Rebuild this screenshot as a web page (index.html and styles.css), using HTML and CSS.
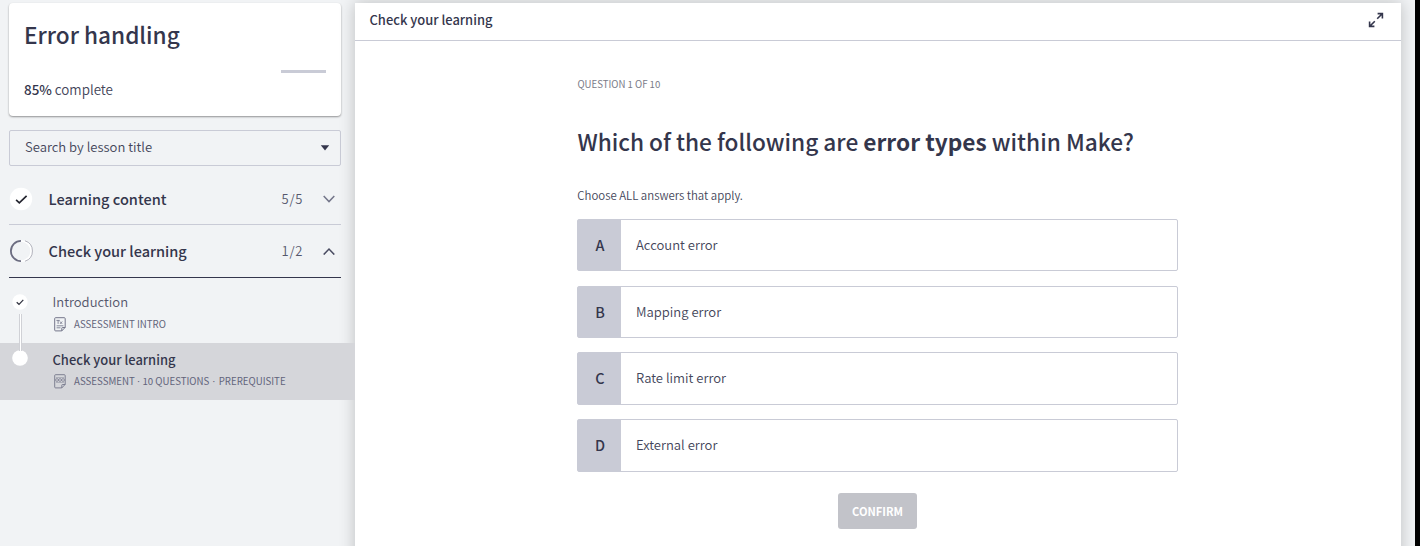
FILE: index.html
```html
<!DOCTYPE html>
<html lang="en">
<head>
<meta charset="utf-8">
<title>Error handling</title>
<link rel="stylesheet" href="styles.css">
</head>
<body>
<div class="app">
  <aside class="sidebar">
    <section class="course-card">
      <h1 class="course-title"><span>Error handling</span></h1>
      <div class="progress"><div class="progress-rest"></div></div>
      <p class="progress-label"><span><b>85%</b> complete</span></p>
    </section>
    <div class="search">
      <span class="search-text">Search by lesson title</span>
      <svg class="caret" width="10" height="6" viewBox="0 0 10 6"><path d="M0.8 0.3H9.2L5 5.4Z" fill="#34364c"/></svg>
    </div>
    <div class="section">
      <svg class="status" width="24" height="24" viewBox="0 0 24 24"><circle cx="12" cy="12" r="11.2" fill="#fff"/><path d="M7.1 12.9L10.3 15.8L17.6 8.9" fill="none" stroke="#24252f" stroke-width="1.7"/></svg>
      <span class="section-title">Learning content</span>
      <span class="count">5/5</span>
      <svg class="chevron" width="12" height="8" viewBox="0 0 12 8"><path d="M0.7 1L6 6.6L11.3 1" fill="none" stroke="#74768a" stroke-width="1.5"/></svg>
    </div>
    <div class="section section-open">
      <svg class="status" width="24" height="24" viewBox="0 0 24 24"><circle cx="12" cy="12" r="10.1" fill="none" stroke="#fff" stroke-width="1.5"/><path d="M16 1.8A10.7 10.7 0 0 1 16 22.2" fill="none" stroke="#a4a5b0" stroke-width="0.8"/><path d="M12 1.9A10.1 10.1 0 0 0 12 22.1" fill="none" stroke="#6b6c80" stroke-width="1.8"/></svg>
      <span class="section-title">Check your learning</span>
      <span class="count">1/2</span>
      <svg class="chevron" width="12" height="8" viewBox="0 0 12 8"><path d="M0.7 7.6L6 2L11.3 7.6" fill="none" stroke="#4a4c62" stroke-width="1.5"/></svg>
    </div>
    <ul class="lessons">
      <li class="lesson">
        <svg class="dot" width="16" height="16" viewBox="0 0 16 16"><circle cx="8" cy="8" r="7.7" fill="#fff"/><path d="M4.7 8.3L7 10.3L11.3 5.8" fill="none" stroke="#30323f" stroke-width="1.2"/></svg>
        <span class="connector"></span>
        <div class="lesson-title"><span>Introduction</span></div>
        <div class="lesson-meta">
          <svg width="12" height="15" viewBox="0 0 12 15" fill="none" stroke="#74768a" stroke-width="1"><path d="M1.5 .7H10.3Q11.2 .7 11.2 1.6V10.4L7.8 13.9H1.6Q.7 13.9 .7 13V1.6Q.7 .7 1.5 .7ZM7.8 13.9V11.2Q7.8 10.5 8.5 10.5H11.2"/><path d="M2.4 3.4H5.8M4.1 3.4V6.9M6 4.5L8.2 6.9M8.2 4.5L6 6.9M2.6 8.8H9.4M2.6 10.8H6.5" stroke-width=".85"/></svg>
          <span>ASSESSMENT INTRO</span>
        </div>
      </li>
      <li class="lesson lesson-active">
        <svg class="dot" width="16" height="16" viewBox="0 0 16 16"><circle cx="8" cy="8" r="7.8" fill="#fff"/></svg>
        <div class="lesson-title"><span>Check your learning</span></div>
        <div class="lesson-meta">
          <svg width="12" height="15" viewBox="0 0 12 15" fill="none" stroke="#74768a" stroke-width=".9"><path d="M1.5 .7H10.3Q11.2 .7 11.2 1.6V10.4L7.8 13.9H1.6Q.7 13.9 .7 13V1.6Q.7 .7 1.5 .7ZM7.8 13.9V11.2Q7.8 10.5 8.5 10.5H11.2"/><path d="M2 3.5H10M2 8.5H10" stroke-width=".4"/><circle cx="3" cy="6" r="1.4" stroke-width=".7"/><circle cx="6" cy="6" r="1.4" stroke-width=".7"/><circle cx="9" cy="6" r="1.4" stroke-width=".7"/></svg>
          <span class="meta-long">ASSESSMENT<i> · </i>10 QUESTIONS<i class="wide"> · </i>PREREQUISITE</span>
        </div>
      </li>
    </ul>
  </aside>
  <main class="panel">
    <header class="panel-head">
      <span class="panel-title">Check your learning</span>
      <svg class="expand" width="16" height="16" viewBox="0 0 16 16" fill="none" stroke="#34364c" stroke-width="1.6"><path d="M9.6 1.6H14.4V6.4M14.2 1.8L9.2 6.8M1.6 9.6V14.4H6.4M1.8 14.2L6.8 9.2"/></svg>
    </header>
    <div class="quiz">
      <p class="step"><span>QUESTION 1 OF 10</span></p>
      <h2 class="question"><span class="q1">Which of the following are </span><b>error types</b><span class="q2"> within Make?</span></h2>
      <p class="hint"><span>Choose ALL answers that apply.</span></p>
      <div class="options">
        <div class="option"><span class="key">A</span><span class="answer">Account error</span></div>
        <div class="option"><span class="key">B</span><span class="answer">Mapping error</span></div>
        <div class="option"><span class="key">C</span><span class="answer">Rate limit error</span></div>
        <div class="option"><span class="key">D</span><span class="answer">External error</span></div>
      </div>
      <button class="confirm"><span>CONFIRM</span></button>
    </div>
  </main>
  <div class="edge"></div>
</div>
</body>
</html>
```
FILE: styles.css
```css
* { box-sizing: border-box; }
body {
  margin: 0;
  width: 1420px;
  height: 546px;
  overflow: hidden;
  font-family: "Noto Sans CJK SC", "Noto Sans", sans-serif;
  color: #34364c;
  background: #f1f3f5;
}
h1, h2, p, ul { margin: 0; padding: 0; font-weight: 500; list-style: none; }
svg { display: block; flex: none; }
.app { display: flex; height: 546px; }

.sidebar { width: 355px; flex: none; padding-top: 3px; }
.course-card {
  margin-left: 9px;
  width: 332px;
  height: 113px;
  padding: 16px 15px 0;
  background: #fff;
  border-radius: 4px;
  box-shadow: 0 1px 2px rgba(0, 0, 0, .4);
}
.course-title { font-size: 22.6px; line-height: 32px; font-weight: 500; white-space: nowrap; }
.progress { display: flex; justify-content: flex-end; margin-top: 19px; }
.progress-rest { width: 45px; height: 3px; background: #c9cbd6; }
.progress-label { margin-top: 6px; font-size: 13.4px; line-height: 21px; font-weight: 350; color: #44465a; }
.progress-label b { font-weight: 500; color: #34364c; }

.search {
  display: flex;
  align-items: center;
  justify-content: space-between;
  margin: 14px 0 0 9px;
  width: 332px;
  height: 36px;
  padding: 0 10px 0 15px;
  border: 1px solid #c9cbd6;
  border-radius: 2px;
}
.search-text { padding-bottom: 2px; font-size: 13.05px; line-height: 32px; font-weight: 350; color: #44465a; }

.section {
  display: flex;
  align-items: center;
  margin-left: 9px;
  width: 332px;
  height: 52px;
  padding: 0 6px 0 0;
  border-bottom: 1px solid #c9cbd6;
}
.search + .section { height: 59px; padding-top: 8px; }
.section-open { height: 53px; border-color: #34364c; }
.section-title { margin-left: 15.5px; font-size: 14.55px; font-weight: 500; line-height: 24px; }
.count { margin-left: auto; width: 41.5px; font-size: 13px; font-weight: 350; line-height: 24px; letter-spacing: .8px; color: #55576c; }

.lesson {
  position: relative;
  height: 57px;
  padding: 5px 0 0 52.5px;
}
.lessons { padding-top: 8px; }
.lesson-title { font-size: 13.05px; line-height: 21px; font-weight: 350; color: #55576c; }
.lesson-meta { display: flex; align-items: center; gap: 8.6px; font-size: 9.68px; line-height: 16px; font-weight: 400; color: #62647a; margin-top: 4px; }
.lesson-meta svg { margin-left: 1px; }
.lesson-meta i { font-family: "Noto Sans", sans-serif; font-style: normal; white-space: pre; }
.lesson-meta .wide { letter-spacing: .6px; }
.lesson-active { padding-top: 6px; background: #d5d6da; }
.lesson-active .lesson-title { font-size: 12.95px; line-height: 22px; font-weight: 500; color: #34364c; }
.lesson-active .lesson-meta { margin-top: 2px; }
.dot { position: absolute; left: 12px; top: 8px; }
.lesson-active .dot { top: 7px; }
.connector {
  position: absolute;
  z-index: 1;
  left: 19px;
  top: 28px;
  width: 3px;
  height: 37px;
  background: #fff;
  border: solid #d0d1d6;
  border-width: 0 1px;
}

.panel {
  width: 1046px;
  flex: none;
  height: 560px;
  margin-top: 3px;
  background: #fff;
  box-shadow: 0 0 15px rgba(0, 0, 0, .22);
}
.panel-head {
  display: flex;
  justify-content: space-between;
  height: 38px;
  padding: 0 17px 0 14.5px;
  border-bottom: 1px solid #c9cbd6;
}
.panel-title { font-size: 12.95px; line-height: 34px; font-weight: 500; }
.expand { margin-top: 9px; }
.quiz { display: flex; flex-direction: column; width: 601px; margin-left: 222px; }
.step { margin-top: 35px; padding-left: .4px; font-size: 9.65px; line-height: 16px; font-weight: 400; color: #7a7b88; }
.question { margin-top: 34px; padding-left: .4px; font-size: 22.67px; line-height: 32px; font-weight: 500; white-space: nowrap; }
.question b { font-weight: 700; }
.question span { white-space: pre; }
.hint { margin-top: 28px; padding-left: .3px; font-size: 11.42px; line-height: 18px; font-weight: 350; color: #44465a; }
.options { display: flex; flex-direction: column; gap: 14.4px; margin-top: 14.8px; }
.option { display: flex; height: 52.4px; border: 1px solid #c9cbd6; border-radius: 2px; }
.key { width: 43px; padding-left: 1px; background: #c9cbd6; text-align: center; font-size: 14.4px; line-height: 49.1px; font-weight: 500; }
.answer { margin-left: 15px; font-size: 13.05px; line-height: 49.1px; font-weight: 350; color: #44465a; }
.confirm {
  align-self: center;
  width: 79px;
  height: 36px;
  margin-top: 21.4px;
  padding: 0;
  border: 0;
  border-radius: 3px;
  background: #c2c3c9;
  color: #fff;
  font: 700 11.1px/34px "Noto Sans CJK SC", "Noto Sans", sans-serif;
}
.edge { position: relative; width: 5px; margin-left: auto; background: #000; }
```
